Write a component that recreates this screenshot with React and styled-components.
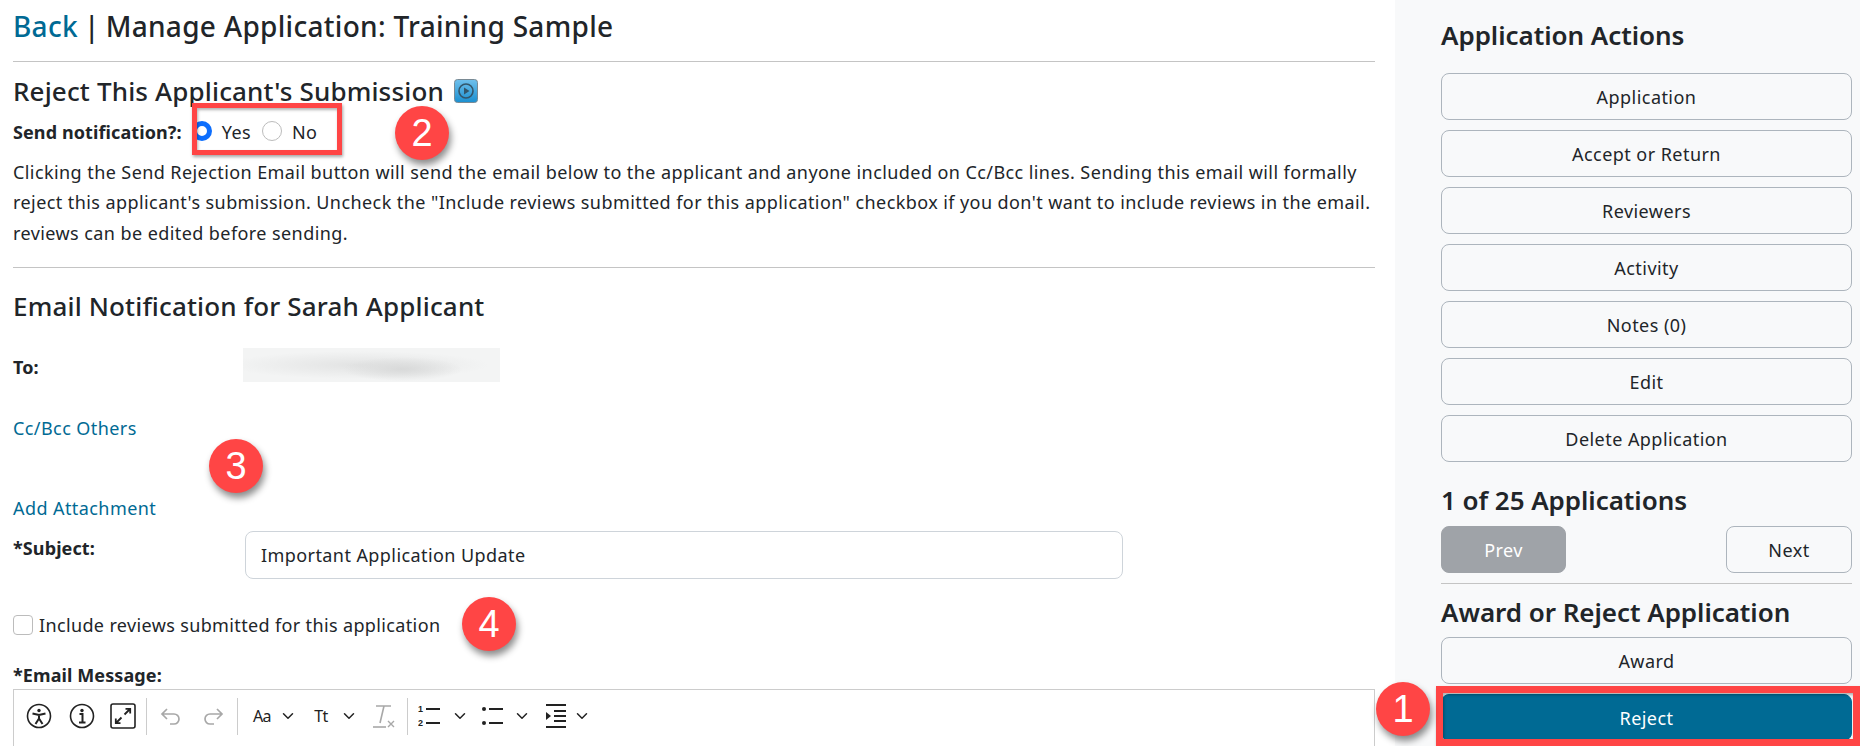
import React from "react";
import styled, { createGlobalStyle } from "styled-components";
import { ChevronDown } from "lucide-react";

const GlobalStyle = createGlobalStyle`
  html, body {
    margin: 0;
    padding: 0;
    background: #fff;
  }
  body {
    font-family: "Noto Sans", "Open Sans", sans-serif;
    font-size: 18px;
    color: #212529;
  }
`;

const Page = styled.div`
  position: relative;
  width: 1860px;
  height: 746px;
  overflow: hidden;
  display: flex;
`;

const Main = styled.main`
  width: 1395px;
  box-sizing: border-box;
  padding: 0 20px 0 13px;
  letter-spacing: 0.42px;
`;

const Title = styled.h1`
  margin: 0;
  height: 62px;
  box-sizing: border-box;
  padding-top: 5px;
  display: flex;
  gap: 6px;
  font-size: 28px;
  line-height: 42px;
  font-weight: 500;
  letter-spacing: 0.3px;
  border-bottom: 1px solid #c4c4c4;
`;

const BackLink = styled.a`
  color: #006a94;
`;

const SectionHead = styled.h2`
  margin: 0;
  display: flex;
  align-items: center;
  gap: 10px;
  font-size: 26px;
  line-height: 32px;
  font-weight: 500;
  letter-spacing: 0.16px;
  padding-top: ${(props) => props.$top}px;
`;

const NotifyRow = styled.div`
  display: flex;
  align-items: center;
  height: 30px;
  margin-top: 10px;
`;

const BoldLabel = styled.label`
  font-weight: 700;
  letter-spacing: 0.1px;
`;

const RadioDot = styled.span`
  width: 20px;
  height: 20px;
  box-sizing: border-box;
  border-radius: 50%;
  margin-left: ${(props) => props.$left}px;
  margin-top: -3px;
  background: #fff;
  border: ${(props) => (props.$on ? "5px solid #0d6efd" : "1px solid #bcbcbc")};
`;

const RadioText = styled.span`
  margin-left: 10px;
`;

const Para = styled.p`
  margin: 10px 0 0;
  line-height: 30.4px;
  height: 91px;
  white-space: nowrap;
`;

const Rule = styled.hr`
  margin: ${(props) => props.$margin};
  border: 0;
  border-top: 1px solid #c4c4c4;
`;

const FormRow = styled.div`
  display: flex;
  align-items: ${(props) => props.$align || "center"};
  height: ${(props) => props.$height}px;
  margin-top: ${(props) => props.$top}px;
`;

const FormLabel = styled.label`
  width: 232px;
  flex: none;
  font-weight: 700;
  letter-spacing: 0.1px;
  padding-top: ${(props) => props.$pad || 0}px;
`;

const BlurredEmail = styled.div`
  width: 257px;
  height: 34px;
  margin-left: -2px;
  background:
    radial-gradient(ellipse 60px 12px at 62% 62%, #d8d9d9, transparent),
    radial-gradient(ellipse 130px 14px at 45% 50%, #e2e3e3, transparent),
    #f3f4f4;
`;

const TextLink = styled.a`
  display: block;
  color: #006a94;
  line-height: 24px;
  margin-top: ${(props) => props.$top}px;
`;

const SubjectInput = styled.div`
  width: 878px;
  height: 48px;
  box-sizing: border-box;
  padding: 0 15px;
  display: flex;
  align-items: center;
  border: 1px solid #ced4da;
  border-radius: 8px;
`;

const CheckRow = styled.div`
  display: flex;
  align-items: center;
  gap: 6px;
  height: 24px;
  margin-top: 34px;
  letter-spacing: 0.36px;
`;

const CheckBox = styled.span`
  width: 20px;
  height: 20px;
  box-sizing: border-box;
  border: 1px solid #bcbcbc;
  border-radius: 4px;
  background: #fff;
`;

const EditorLabel = styled.div`
  font-weight: 700;
  letter-spacing: 0.1px;
  line-height: 24px;
  margin-top: 26px;
`;

const Editor = styled.div`
  margin-top: 2px;
  height: 120px;
  box-sizing: border-box;
  border: 1px solid #ccc;
  padding: 7px 0 0 12px;
`;

const Toolbar = styled.div`
  display: flex;
  align-items: center;
  height: 38px;
  letter-spacing: 0;
`;

const ToolButton = styled.span`
  display: flex;
  justify-content: center;
  align-items: center;
  flex: none;
  width: ${(props) => props.$w}px;
  height: 38px;
  margin-left: ${(props) => props.$left || 0}px;
  color: ${(props) => (props.$muted ? "#9a9a9a" : "#222")};
  font-size: 16px;
  letter-spacing: -0.5px;
`;

const ToolSep = styled.span`
  flex: none;
  width: 1px;
  height: 37px;
  background: #ccc;
  margin-left: ${(props) => props.$left}px;
`;

const Sidebar = styled.aside`
  width: 465px;
  box-sizing: border-box;
  padding: 0 8px 0 46px;
  background: #f8f9fa;
`;

const SideTitle = styled.h2`
  margin: 0;
  font-size: 26px;
  line-height: 32px;
  font-weight: 600;
  letter-spacing: -0.05px;
  padding-top: ${(props) => props.$top}px;
  padding-bottom: ${(props) => props.$bottom}px;
`;

const ActionButton = styled.button`
  display: block;
  width: ${(props) => props.$width || "100%"};
  height: 47px;
  margin: 0 0 ${(props) => props.$gap ?? 10}px;
  padding: 1px 0 0;
  font: inherit;
  letter-spacing: 0.45px;
  color: ${(props) => (props.$solid ? "#fff" : "#212529")};
  background: ${(props) => props.$solid || "#f8f9fa"};
  border: 1px solid ${(props) => (props.$solid ? props.$solid : "#adb5bd")};
  border-radius: 8px;
`;

const Pager = styled.div`
  display: flex;
  justify-content: space-between;
`;

const SideRule = styled.hr`
  margin: 10px 0 0;
  border: 0;
  border-top: 1px solid #c4c4c4;
`;

const Outline = styled.div`
  position: absolute;
  left: ${(props) => props.$x}px;
  top: ${(props) => props.$y}px;
  width: ${(props) => props.$w}px;
  height: ${(props) => props.$h}px;
  box-sizing: border-box;
  border: ${(props) => props.$size || 5}px solid #ff4545;
  box-shadow:
    1px 2px 3px rgba(0, 0, 0, 0.35),
    inset 1px 2px 3px rgba(0, 0, 0, 0.3);
`;

const Badge = styled.div`
  position: absolute;
  left: ${(props) => props.$x - 27}px;
  top: ${(props) => props.$y - 27}px;
  width: 54px;
  height: 54px;
  border-radius: 50%;
  background: #ff4545;
  color: #fff;
  font-family: "Liberation Sans", sans-serif;
  font-size: 38px;
  display: flex;
  align-items: center;
  justify-content: center;
  box-shadow: 2px 5px 7px rgba(0, 0, 0, 0.45);
`;

function PlayIcon() {
  return (
    <svg width="24" height="24" viewBox="0 0 24 24">
      <defs>
        <linearGradient id="playBg" x1="0" y1="0" x2="0" y2="1">
          <stop offset="0" stopColor="#6fc0ec" />
          <stop offset="1" stopColor="#1b8fd0" />
        </linearGradient>
      </defs>
      <rect x="0.5" y="0.5" width="23" height="23" rx="3" fill="url(#playBg)" stroke="#7a8a94" />
      <circle cx="12" cy="12" r="7" fill="none" stroke="#33566b" strokeWidth="1.6" />
      <path d="M10 8.5 L15.5 12 L10 15.5 Z" fill="#33566b" />
    </svg>
  );
}

function AccessIcon() {
  return (
    <svg width="26" height="26" viewBox="0 0 26 26" fill="none" stroke="#222" strokeWidth="1.6">
      <circle cx="13" cy="13" r="11.5" />
      <circle cx="13" cy="7.5" r="1.7" fill="#222" stroke="none" />
      <path d="M6.5 10.5 L13 12 L19.5 10.5 M13 12 V15.5 M13 15.5 L9.5 21 M13 15.5 L16.5 21" strokeWidth="2" />
    </svg>
  );
}

function InfoIcon() {
  return (
    <svg width="26" height="26" viewBox="0 0 26 26" fill="none" stroke="#222" strokeWidth="1.6">
      <circle cx="13" cy="13" r="11.5" />
      <circle cx="13" cy="7.5" r="1.7" fill="#222" stroke="none" />
      <path d="M10.5 11 H13.5 V19 M10 19.5 H16.5" strokeWidth="2" />
    </svg>
  );
}

function ExpandIcon() {
  return (
    <svg width="26" height="26" viewBox="0 0 26 26" fill="none" stroke="#222" strokeWidth="1.6">
      <rect x="1" y="1" width="24" height="24" rx="2" />
      <path d="M14.5 11.5 L20 6 M15.5 5.8 H20.2 V10.5 M11.5 14.5 L6 20 M5.8 15.5 V20.2 H10.5" strokeWidth="1.8" />
    </svg>
  );
}

function UndoIcon({ flip }) {
  return (
    <svg
      width="22"
      height="18"
      viewBox="0 0 22 18"
      fill="none"
      stroke="#a8a8a8"
      strokeWidth="1.7"
      style={flip ? { transform: "scaleX(-1)" } : undefined}
    >
      <path d="M7 2 L2 7 L7 12 M2 7 H14 A5 5 0 0 1 14 17 H10" />
    </svg>
  );
}

function ClearFormat() {
  return (
    <svg width="26" height="28" viewBox="0 0 26 28" fill="none" stroke="#a8a8a8">
      <path d="M6 4 H21 M14 4 L10 21" strokeWidth="1.6" />
      <path d="M3 25 H16" strokeWidth="1.6" />
      <path d="M18 19 L24 25 M24 19 L18 25" strokeWidth="1.4" />
    </svg>
  );
}

function OrderedIcon() {
  return (
    <svg width="24" height="26" viewBox="0 0 24 26" fill="#222" stroke="#222">
      <text x="0" y="9" fontSize="9" stroke="none" fontWeight="700" fontFamily="Liberation Sans">1</text>
      <text x="0" y="23" fontSize="9" stroke="none" fontWeight="700" fontFamily="Liberation Sans">2</text>
      <path d="M8 6 H22 M8 20 H22" strokeWidth="2" />
    </svg>
  );
}

function BulletIcon() {
  return (
    <svg width="24" height="26" viewBox="0 0 24 26" stroke="#222">
      <circle cx="3" cy="6" r="2" fill="#222" stroke="none" />
      <circle cx="3" cy="20" r="2" fill="#222" stroke="none" />
      <path d="M8 6 H22 M8 20 H22" strokeWidth="2" />
    </svg>
  );
}

function IndentIcon() {
  return (
    <svg width="22" height="26" viewBox="0 0 22 26" stroke="#222">
      <path d="M1 2 H21 M9 8 H21 M9 13 H21 M9 18 H21 M1 24 H21" strokeWidth="2" />
      <path d="M1 9 L6 13 L1 17 Z" fill="#222" stroke="none" />
    </svg>
  );
}

const Chevron = () => <ChevronDown size={18} strokeWidth={2} />;

export default function App() {
  return (
    <Page>
      <GlobalStyle />
      <Main>
        <Title>
          <BackLink>Back</BackLink>
          <span>|</span>
          <span>Manage Application: Training Sample</span>
        </Title>
        <SectionHead $top={13}>
          Reject This Applicant's Submission <PlayIcon />
        </SectionHead>
        <NotifyRow>
          <BoldLabel>Send notification?:</BoldLabel>
          <RadioDot $on $left={10} />
          <RadioText>Yes</RadioText>
          <RadioDot $left={11} />
          <RadioText>No</RadioText>
        </NotifyRow>
        <Para>
          Clicking the Send Rejection Email button will send the email below to the applicant and anyone included on Cc/Bcc lines. Sending this email will formally
          <br />
          reject this applicant's submission. Uncheck the "Include reviews submitted for this application" checkbox if you don't want to include reviews in the email.
          <br />
          reviews can be edited before sending.
        </Para>
        <Rule $margin="19px 0 0" />
        <SectionHead $top={22}>Email Notification for Sarah Applicant</SectionHead>
        <FormRow $height={34} $top={26}>
          <FormLabel $pad={3}>To:</FormLabel>
          <BlurredEmail />
        </FormRow>
        <TextLink $top={34}>Cc/Bcc Others</TextLink>
        <TextLink $top={56}>Add Attachment</TextLink>
        <FormRow $height={48} $top={11} $align="flex-start">
          <FormLabel $pad={5}>*Subject:</FormLabel>
          <SubjectInput>Important Application Update</SubjectInput>
        </FormRow>
        <CheckRow>
          <CheckBox />
          <span>Include reviews submitted for this application</span>
        </CheckRow>
        <EditorLabel>*Email Message:</EditorLabel>
        <Editor>
          <Toolbar>
            <ToolButton $w={26}><AccessIcon /></ToolButton>
            <ToolButton $w={26} $left={17}><InfoIcon /></ToolButton>
            <ToolButton $w={26} $left={15}><ExpandIcon /></ToolButton>
            <ToolSep $left={10} />
            <ToolButton $w={42} $left={3} $muted><UndoIcon /></ToolButton>
            <ToolButton $w={42} $muted><UndoIcon flip /></ToolButton>
            <ToolSep $left={3} />
            <ToolButton $w={34} $left={7}>Aa</ToolButton>
            <ToolButton $w={18}><Chevron /></ToolButton>
            <ToolButton $w={22} $left={13}>Tt</ToolButton>
            <ToolButton $w={18} $left={8}><Chevron /></ToolButton>
            <ToolButton $w={34} $left={8} $muted><ClearFormat /></ToolButton>
            <ToolSep $left={7} />
            <ToolButton $w={30} $left={7}><OrderedIcon /></ToolButton>
            <ToolButton $w={18} $left={6}><Chevron /></ToolButton>
            <ToolButton $w={32} $left={8}><BulletIcon /></ToolButton>
            <ToolButton $w={18} $left={4}><Chevron /></ToolButton>
            <ToolButton $w={34} $left={8}><IndentIcon /></ToolButton>
            <ToolButton $w={18}><Chevron /></ToolButton>
          </Toolbar>
        </Editor>
      </Main>
      <Sidebar>
        <SideTitle $top={19} $bottom={22}>Application Actions</SideTitle>
        <ActionButton>Application</ActionButton>
        <ActionButton>Accept or Return</ActionButton>
        <ActionButton>Reviewers</ActionButton>
        <ActionButton>Activity</ActionButton>
        <ActionButton>Notes (0)</ActionButton>
        <ActionButton>Edit</ActionButton>
        <ActionButton>Delete Application</ActionButton>
        <SideTitle $top={12} $bottom={10}>1 of 25 Applications</SideTitle>
        <Pager>
          <ActionButton $width="125px" $solid="#9fa3a8" $gap={0}>Prev</ActionButton>
          <ActionButton $width="126px" $gap={0}>Next</ActionButton>
        </Pager>
        <SideRule />
        <SideTitle $top={12} $bottom={9}>Award or Reject Application</SideTitle>
        <ActionButton>Award</ActionButton>
        <ActionButton $solid="#006a94">Reject</ActionButton>
      </Sidebar>
      <Outline $x={192} $y={103} $w={150} $h={52} />
      <Outline $x={1436} $y={686} $w={424} $h={60} $size={7} />
      <Badge $x={422} $y={133}>2</Badge>
      <Badge $x={236} $y={466}>3</Badge>
      <Badge $x={489} $y={624}>4</Badge>
      <Badge $x={1403} $y={709}>1</Badge>
    </Page>
  );
}
